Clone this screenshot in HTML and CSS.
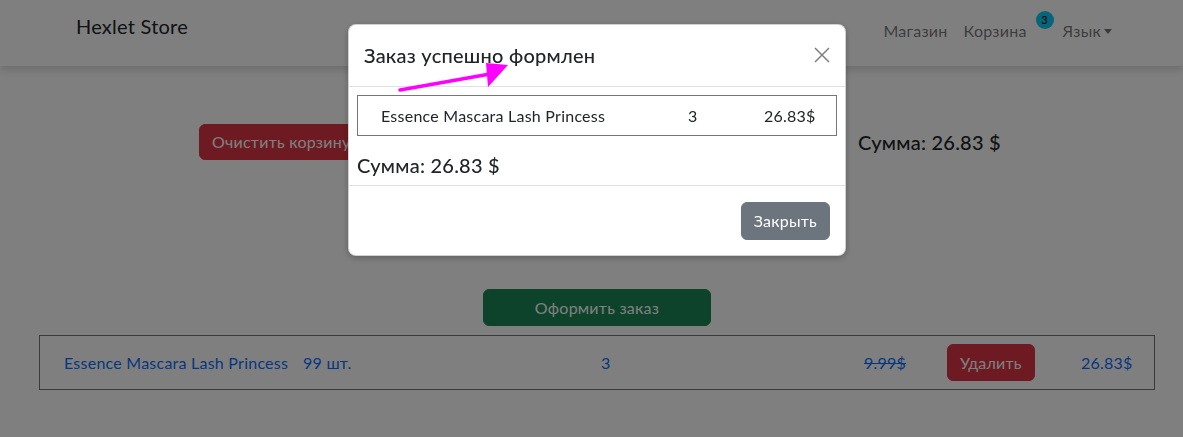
FILE: index.html
```html
<!DOCTYPE html>
<html lang="ru">
<head>
<meta charset="utf-8">
<title>Hexlet Store</title>
<link rel="stylesheet" href="styles.css">
</head>
<body>
<nav class="navbar">
  <a class="brand" href="#">Hexlet Store</a>
  <ul class="nav">
    <li><a class="nav-link" href="#">Магазин</a></li>
    <li class="cart-item"><a class="nav-link" href="#">Корзина</a><span class="badge">3</span></li>
    <li><a class="nav-link dropdown" href="#">Язык</a></li>
  </ul>
</nav>
<main class="page">
  <div class="cart-top">
    <div><button class="btn btn-danger">Очистить корзину</button></div>
    <h5 class="sum">Сумма: 26.83 $</h5>
  </div>
  <div class="order">
    <button class="btn btn-success order-btn">Оформить заказ</button>
  </div>
  <div class="cart-row">
    <a class="link" href="#">Essence Mascara Lash Princess</a>
    <span class="link">99 шт.</span>
    <span class="link">3</span>
    <s class="link">9.99$</s>
    <div><button class="btn btn-danger">Удалить</button></div>
    <span class="link">26.83$</span>
  </div>
</main>
<div class="backdrop"></div>
<div class="modal">
  <div class="modal-header">
    <h5 class="modal-title">Заказ успешно формлен</h5>
    <button class="btn-close" aria-label="Close">
      <svg width="16" height="16" viewBox="0 0 16 16"><path d="M1 1L15 15M15 1L1 15" stroke="#000" stroke-width="1.5" fill="none"/></svg>
    </button>
  </div>
  <div class="modal-body">
    <div class="order-table">
      <span>Essence Mascara Lash Princess</span>
      <span>3</span>
      <span>26.83$</span>
    </div>
    <h5 class="modal-sum">Сумма: 26.83 $</h5>
  </div>
  <div class="modal-footer">
    <button class="btn btn-secondary">Закрыть</button>
  </div>
</div>
<svg class="arrow" width="1183" height="437" viewBox="0 0 1183 437">
  <line x1="400" y1="90" x2="490" y2="74" stroke="#ff00ff" stroke-width="3.5" stroke-linecap="round"/>
  <polygon points="486,63 508,65 488,87" fill="#ff00ff"/>
</svg>
</body>
</html>
```
FILE: styles.css
```css
* { box-sizing: border-box; }
html, body { margin: 0; }
body {
  font-family: "Lato", "Noto Sans", sans-serif;
  font-size: 16px;
  line-height: 1.5;
  letter-spacing: .015em;
  color: #212529;
  background: #fff;
  height: 437px;
  overflow: hidden;
}
a { text-decoration: none; }
button { font-family: inherit; letter-spacing: inherit; }

.navbar {
  height: 66px;
  display: flex;
  justify-content: space-between;
  align-items: flex-start;
  padding: 0 71px 0 76px;
  background: #fff;
  box-shadow: 0 4px 8px rgba(0,0,0,.15);
  position: relative;
}
.brand {
  font-size: 20px;
  line-height: 30px;
  margin-top: 11px;
  color: #212529;
}
.nav {
  list-style: none;
  margin: 19px 0 0;
  padding: 0;
  display: flex;
}
.nav-link {
  display: block;
  padding: 0 8px;
  color: rgba(0,0,0,.55);
}
.nav li:last-child .nav-link { padding-right: 0; }
.cart-item { position: relative; padding-right: 20px; }
.badge {
  position: absolute;
  left: calc(100% - 19px);
  top: -8px;
  width: 18px;
  height: 18px;
  border-radius: 50%;
  background: #0dcaf0;
  color: #000;
  font-size: 11px;
  line-height: 18px;
  text-align: center;
}
.dropdown::after {
  content: "";
  display: inline-block;
  margin-left: 3px;
  vertical-align: 3px;
  border-top: 5px solid;
  border-left: 4px solid transparent;
  border-right: 4px solid transparent;
}

.btn {
  display: inline-block;
  border: 1px solid transparent;
  border-radius: 6px;
  padding: 5px 12px;
  font-size: 16px;
  line-height: 24px;
  color: #fff;
  cursor: pointer;
}
.btn-danger { background: #dc3545; border-color: #dc3545; }
.btn-success { background: #198754; border-color: #198754; }
.btn-secondary { background: #6c757d; border-color: #6c757d; }

.page { display: block; }
.cart-top {
  display: grid;
  grid-template-columns: 659px auto;
  align-items: center;
  margin-top: 58px;
  padding-left: 199px;
  height: 36px;
}
.sum {
  margin: 0;
  font-size: 20px;
  font-weight: 500;
  line-height: 30px;
}
.order {
  margin-top: 129px;
  padding-left: 483px;
}
.order-btn { width: 228px; height: 37px; }
.cart-row {
  margin: 9px 28px 0 39px;
  border: 1px solid #777;
  height: 55px;
  display: grid;
  grid-template-columns: 239px 298px 263px 83px 134px auto;
  align-items: center;
  padding-left: 24px;
}
.link { color: #0d6efd; }
.cart-row .btn { height: 37px; }

.backdrop {
  position: fixed;
  inset: 0;
  background: rgba(0,0,0,.5);
}
.modal {
  position: fixed;
  left: 348px;
  top: 24px;
  width: 498px;
  background: #fff;
  border: 1px solid rgba(0,0,0,.175);
  border-radius: 8px;
  box-shadow: 0 2px 6px rgba(0,0,0,.25);
}
.modal-header {
  display: flex;
  align-items: center;
  justify-content: space-between;
  padding: 15px 15px 16px;
  border-bottom: 1px solid #dee2e6;
}
.modal-title {
  margin: 0;
  font-size: 20px;
  font-weight: 500;
  line-height: 30px;
}
.btn-close {
  background: none;
  border: 0;
  padding: 0;
  width: 16px;
  height: 16px;
  opacity: .5;
  cursor: pointer;
}
.btn-close svg { display: block; }
.modal-body { padding: 8px 8px 5px; }
.order-table {
  border: 1px solid #777;
  height: 41px;
  display: grid;
  grid-template-columns: 307px 76px auto;
  align-items: center;
  padding-left: 23px;
}
.modal-sum {
  margin: 14px 0 0;
  font-size: 20px;
  font-weight: 500;
  line-height: 30px;
}
.modal-footer {
  display: flex;
  justify-content: flex-end;
  padding: 16px 15px 15px;
  border-top: 1px solid #dee2e6;
}
.modal-footer .btn { height: 38px; }
.arrow {
  position: fixed;
  left: 0;
  top: 0;
  pointer-events: none;
}
```
